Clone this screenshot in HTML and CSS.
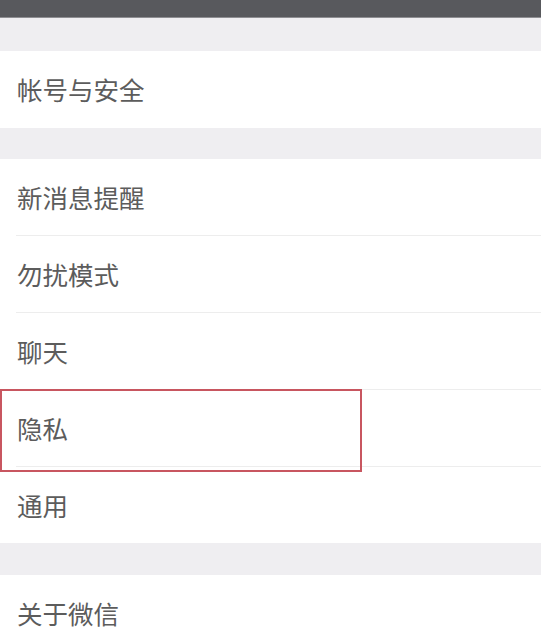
FILE: index.html
```html
<!DOCTYPE html>
<html lang="zh-CN">
<head>
<meta charset="utf-8">
<title>设置</title>
<link rel="stylesheet" href="styles.css">
</head>
<body>
<div class="topbar"></div>
<div class="gap gap-first"></div>
<div class="group">
  <div class="row row-tall">帐号与安全</div>
</div>
<div class="gap gap-mid"></div>
<div class="group">
  <div class="row">新消息提醒</div>
  <div class="row">勿扰模式</div>
  <div class="row">聊天</div>
  <div class="row row-marked">隐私<span class="mark"></span></div>
  <div class="row">通用</div>
</div>
<div class="gap gap-last"></div>
<div class="group">
  <div class="row">关于微信</div>
</div>
</body>
</html>
```

FILE: styles.css
```css
html, body {
  margin: 0;
  padding: 0;
  background: #efeef1;
  font-family: "Noto Sans CJK SC", "Noto Sans", sans-serif;
}
.topbar {
  height: 17px;
  background: #58595d;
  border-bottom: 1px solid #8e8e92;
}
.gap-first { height: 33px; }
.gap-mid { height: 31px; }
.gap-last { height: 32px; }
.group {
  background: #ffffff;
}
.row {
  position: relative;
  height: 76px;
  box-sizing: border-box;
  padding-bottom: 2px;
  display: flex;
  align-items: center;
  padding-left: 17px;
  font-size: 25.5px;
  color: #5c5c5c;
}
.row-tall { height: 77px; padding-bottom: 3px; }
.row + .row {
  height: 77px;
  border-top: 1px solid transparent;
}
.row + .row::before {
  content: "";
  position: absolute;
  left: 16px;
  right: 0;
  top: -1px;
  height: 1px;
  background: #ededed;
}
.mark {
  position: absolute;
  left: 0;
  top: -1px;
  width: 362px;
  height: 83px;
  box-sizing: border-box;
  border: 2px solid #c85660;
  z-index: 1;
}
```
